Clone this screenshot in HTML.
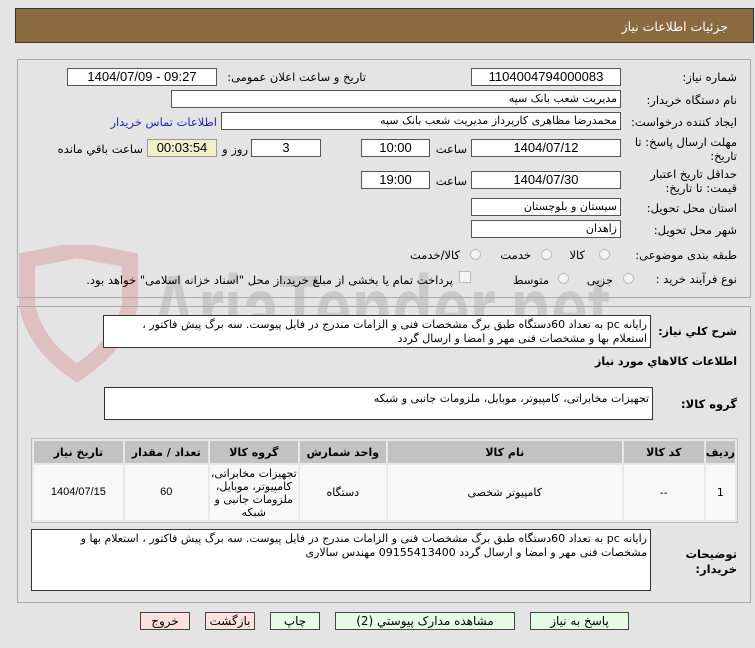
<!DOCTYPE html>
<html><head><meta charset="utf-8"><style>
*{box-sizing:border-box;margin:0;padding:0}
body{width:755px;height:648px;background:#e4e4e4;font-family:"DejaVu Sans","Liberation Sans",sans-serif;font-size:11px;color:#000;position:relative;overflow:hidden}
.a{position:absolute;white-space:nowrap}
.box{position:absolute;background:#fff;border:1px solid #555;height:18px;line-height:16px;font-family:"Liberation Sans","DejaVu Sans",sans-serif;font-size:13px}
.c{text-align:center}
.rt{text-align:right;padding-right:3px;direction:rtl;font-family:"DejaVu Sans",sans-serif;font-size:11px}
.lbl{position:absolute;direction:rtl;white-space:nowrap;font-size:11.5px}
.radio{position:absolute;width:11px;height:11px;border-radius:50%;border:1px solid #bbb;background:#f4f4f4}
.ta{position:absolute;background:#fff;border:1px solid #333;direction:rtl;text-align:right;padding:2px 3px;font-size:11px;line-height:17px}
table{position:absolute;left:31px;top:438px;width:707px;border-collapse:separate;border-spacing:2px;background:#e8e8e8;border:1px solid #bbb}
th{background:#c2c2c2;height:22px;font-weight:bold;font-size:11px}
td{background:#f8f8f8;text-align:center;font-size:11px;line-height:13px}
.btn{position:absolute;top:612px;height:18px;border:1px solid #444;background:#e6fbe6;text-align:center;line-height:16px;font-size:12px;direction:rtl}
</style></head><body>
<div class="a" style="left:15px;top:8px;width:739px;height:35px;background:#8c6a40;border:1px solid #333"></div>
<div class="lbl" style="right:27px;top:19px;color:#fff;font-size:12.5px">جزئیات اطلاعات نیاز</div>

<svg class="a" style="left:15px;top:245px;opacity:.2" width="600" height="140"><path d="M12 15 L62 5 L115 15 L115 60 Q105 100 62 128 Q20 100 12 60 Z" fill="none" stroke="#c33" stroke-width="16"/><text x="135" y="100" font-family="Liberation Sans" font-weight="bold" font-size="100" fill="#666" textLength="460" lengthAdjust="spacingAndGlyphs">AriaTender.net</text></svg>

<div class="a" style="left:17px;top:59px;width:734px;height:239px;border:1px solid #aaa"></div>
<div class="a" style="left:17px;top:306px;width:734px;height:297px;border:1px solid #aaa"></div>

<div class="lbl" style="right:18px;top:70px">شماره نیاز:</div>
<div class="box c" style="left:471px;top:68px;width:150px">1104004794000083</div>
<div class="lbl" style="right:389px;top:70px">تاریخ و ساعت اعلان عمومی:</div>
<div class="box c" style="left:67px;top:68px;width:150px">1404/07/09 - 09:27</div>

<div class="lbl" style="right:18px;top:93px">نام دستگاه خریدار:</div>
<div class="box rt" style="left:171px;top:90px;width:450px">مدیریت شعب بانک سپه</div>

<div class="lbl" style="right:18px;top:115px">ایجاد کننده درخواست:</div>
<div class="box rt" style="left:221px;top:112px;width:400px">محمدرضا مظاهری کارپرداز مدیریت شعب بانک سپه</div>
<div class="lbl" style="right:538px;top:115px;color:#2222cc">اطلاعات تماس خریدار</div>

<div class="lbl" style="right:18px;top:135px">مهلت ارسال پاسخ: تا</div>
<div class="lbl" style="right:18px;top:149px">تاریخ:</div>
<div class="box c" style="left:471px;top:139px;width:150px">1404/07/12</div>
<div class="lbl" style="right:288px;top:142px">ساعت</div>
<div class="box c" style="left:361px;top:139px;width:69px">10:00</div>
<div class="box c" style="left:251px;top:139px;width:70px">3</div>
<div class="lbl" style="right:507px;top:142px">روز و</div>
<div class="box c" style="left:147px;top:139px;width:70px;background:#f2f0c8;border-color:#999">00:03:54</div>
<div class="lbl" style="right:612px;top:142px">ساعت باقي مانده</div>

<div class="lbl" style="right:18px;top:167px">حداقل تاریخ اعتبار</div>
<div class="lbl" style="right:18px;top:181px">قیمت: تا تاریخ:</div>
<div class="box c" style="left:471px;top:171px;width:150px">1404/07/30</div>
<div class="lbl" style="right:288px;top:174px">ساعت</div>
<div class="box c" style="left:361px;top:171px;width:69px">19:00</div>

<div class="lbl" style="right:18px;top:201px">استان محل تحویل:</div>
<div class="box rt" style="left:471px;top:198px;width:150px">سیستان و بلوچستان</div>
<div class="lbl" style="right:18px;top:223px">شهر محل تحویل:</div>
<div class="box rt" style="left:471px;top:220px;width:150px">زاهدان</div>

<div class="lbl" style="right:18px;top:248px">طبقه بندی موضوعی:</div>
<div class="radio" style="left:599px;top:249px"></div><div class="lbl" style="right:170px;top:248px">کالا</div>
<div class="radio" style="left:541px;top:249px"></div><div class="lbl" style="right:224px;top:248px">خدمت</div>
<div class="radio" style="left:470px;top:249px"></div><div class="lbl" style="right:295px;top:248px">کالا/خدمت</div>

<div class="lbl" style="right:18px;top:272px">نوع فرآیند خرید :</div>
<div class="radio" style="left:623px;top:273px"></div><div class="lbl" style="right:142px;top:273px">جزیی</div>
<div class="radio" style="left:558px;top:273px"></div><div class="lbl" style="right:206px;top:273px">متوسط</div>
<div class="a" style="left:459px;top:271px;width:12px;height:12px;border:1px solid #bbb;background:#f4f4f4"></div>
<div class="lbl" style="right:302px;top:273px">پرداخت تمام یا بخشی از مبلغ خرید،از محل "اسناد خزانه اسلامی" خواهد بود.</div>

<div class="lbl" style="right:18px;top:325px;font-weight:bold;font-size:11px">شرح کلي نياز:</div>
<div class="ta" style="left:103px;top:315px;width:548px;height:33px;line-height:14px">رایانه pc به تعداد 60دستگاه طبق برگ مشخصات فنی و الزامات مندرج در فایل پیوست. سه برگ پیش فاکتور ، استعلام بها و مشخصات فنی مهر و امضا و ارسال گردد</div>

<div class="lbl" style="right:18px;top:355px;font-weight:bold;font-size:11px">اطلاعات کالاهاي مورد نياز</div>
<div class="lbl" style="right:18px;top:397px;font-weight:bold">گروه کالا:</div>
<div class="ta" style="left:104px;top:387px;width:549px;height:33px">تجهیزات مخابراتی، کامپیوتر، موبایل، ملزومات جانبی و شبکه</div>

<table dir="rtl">
<tr><th style="width:28px">ردیف</th><th style="width:80px">کد کالا</th><th style="width:234px">نام کالا</th><th style="width:86px">واحد شمارش</th><th style="width:88px">گروه کالا</th><th style="width:83px">تعداد / مقدار</th><th>تاریخ نیاز</th></tr>
<tr style="height:55px"><td>1</td><td>--</td><td>کامپیوتر شخصی</td><td>دستگاه</td><td style="font-size:11px">تجهیزات مخابراتی، کامپیوتر، موبایل، ملزومات جانبی و شبکه</td><td style="font-family:'Liberation Sans'">60</td><td style="font-family:'Liberation Sans'">1404/07/15</td></tr>
</table>

<div class="lbl" style="right:18px;top:547px;font-weight:bold">توضیحات</div>
<div class="lbl" style="right:18px;top:562px;font-weight:bold">خریدار:</div>
<div class="ta" style="left:31px;top:529px;width:620px;height:62px;line-height:14px">رایانه pc به تعداد 60دستگاه طبق برگ مشخصات فنی و الزامات مندرج در فایل پیوست. سه برگ پیش فاکتور ، استعلام بها و مشخصات فنی مهر و امضا و ارسال گردد 09155413400 مهندس سالاری</div>

<div class="btn" style="left:530px;width:99px">پاسخ به نیاز</div>
<div class="btn" style="left:335px;width:180px">مشاهده مدارک پیوستي (2)</div>
<div class="btn" style="left:270px;width:50px">چاپ</div>
<div class="btn" style="left:205px;width:50px;background:#fde0e0">بازگشت</div>
<div class="btn" style="left:140px;width:50px;background:#fde0e0">خروج</div>
</body></html>
